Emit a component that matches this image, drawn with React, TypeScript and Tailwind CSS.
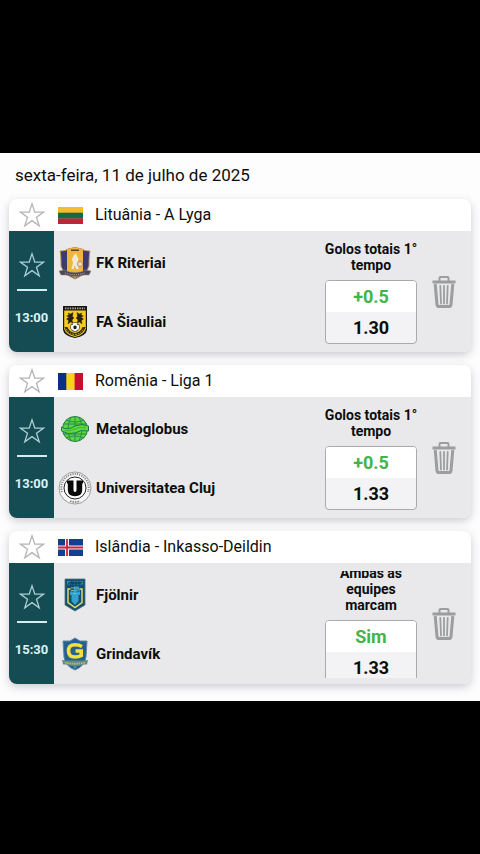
import React from "react";

type Team = { name: string; crest: React.ReactNode };
type Match = {
  league: string;
  flag: React.ReactNode;
  time: string;
  home: Team;
  away: Team;
  market: string;
  pick: string;
  odds: string;
};

const LithuaniaFlag = () => (
  <svg viewBox="0 0 25 17" className="h-[17px] w-[25px]" aria-hidden="true">
    <rect width="25" height="6" fill="#f6bd2b" />
    <rect y="5.7" width="25" height="6" fill="#116b45" />
    <rect y="11.4" width="25" height="5.6" fill="#bd2639" />
  </svg>
);

const RomaniaFlag = () => (
  <svg viewBox="0 0 25 17" className="h-[17px] w-[25px]" aria-hidden="true">
    <rect width="9" height="17" fill="#0b2f83" />
    <rect x="8.3" width="9" height="17" fill="#f8d21e" />
    <rect x="16.6" width="8.4" height="17" fill="#c8102e" />
  </svg>
);

const IcelandFlag = () => (
  <svg viewBox="0 0 25 17" className="h-[17px] w-[25px]" aria-hidden="true">
    <rect width="25" height="17" fill="#123f91" />
    <path d="M0 8.5H25M9 0V17" stroke="#f0eef2" strokeWidth="4" />
    <path d="M0 8.5H25M9 0V17" stroke="#cf2438" strokeWidth="1.8" />
  </svg>
);

const RiteriaiCrest = () => (
  <svg viewBox="0 0 32 34" className="h-[34px] w-8" aria-hidden="true">
    <path d="M1 5Q7 5 9 3Q16 0 23 3Q25 5 31 5Q30 8 30 20Q28 28 16 33Q4 28 2 20Q2 8 1 5Z" fill="#3b3b72" stroke="#b99a55" strokeWidth=".9" />
    <path d="M8 3.500Q16 0 24 3.500V27Q20 30 16 32Q12 30 8 27Z" fill="#efb73a" />
    <path d="M12 3.500H20V5H12Z" fill="#5a4428" />
    <path d="M15 9L17 7.500L18 10L19.500 13L18.500 17L19.500 23H17L16 19L14.500 23H12.500L14 17L13 13Z" fill="#f4ead4" />
    <circle cx="21" cy="18" r="2.6" fill="#e9d9b5" stroke="#8d8482" strokeWidth=".7" />
    <path d="M0 25L5 24Q16 29 27 24L32 25L30 29L25 29Q16 32 7 29L2 29Z" fill="#4c4660" stroke="#9d8b72" strokeWidth=".5" />
    <path d="M6 26.800Q16 30.500 26 26.800" fill="none" stroke="#a8977c" strokeWidth="1.1" strokeDasharray="1.2 1" />
  </svg>
);

const SiauliaiCrest = () => (
  <svg viewBox="0 0 26 34" className="h-[34px] w-[26px]" aria-hidden="true">
    <path d="M1 1H25V25Q24 31 13 33Q2 31 1 25Z" fill="#191713" />
    <path d="M2.200 5.500H23.800V24Q22 30 13 32Q4 30 2.200 24Z" fill="#f3ce20" />
    <path d="M3 3.3H23" stroke="#b9b19c" strokeWidth="1.800" strokeDasharray="1.4 1" />
    <path d="M6 8L8.500 9L11 7.500L10.500 11.500L12 13L10 15L11 18L8.500 17L6 19L6.500 15.500L4.500 14L7 12L4.500 11L7 10ZM20 8L17.500 9L15 7.500L15.500 11.500L14 13L16 15L15 18L17.500 17L20 19L19.500 15.500L21.500 14L19 12L21.500 11L19 10Z" fill="#2b210c" stroke="#2b210c" strokeWidth=".4" />
    <path d="M2.500 22L5.500 22Q7 27 13 28Q19 27 20.500 22L23.500 22Q22 29 13 31Q4 29 2.500 22Z" fill="#3a2f12" />
    <path d="M4.300 24Q7 29 13 29.500Q19 29 21.700 24" fill="none" stroke="#d9b82e" strokeWidth="1" strokeDasharray="1.5 1.200" />
    <circle cx="13" cy="22" r="4.6" fill="#f8f7f3" stroke="#28251f" strokeWidth=".6" />
    <path d="M13 20.300L14.800 21.700L14.100 24H11.900L11.200 21.700ZM9 20L10.500 18.800L10.800 20ZM17 20L15.500 18.800L15.200 20ZM10 25L11 24.700L11.500 26ZM16 25L15 24.700L14.500 26Z" fill="#171717" />
  </svg>
);

const MetaloglobusCrest = () => (
  <svg viewBox="0 0 28 28" className="size-7" aria-hidden="true">
    <circle cx="14" cy="14" r="12.5" fill="#58d83c" stroke="#2c7955" strokeWidth="1" />
    <path d="M14 1V27M2 9H26M2 19H26M5 5Q14 9 23 5M5 23Q14 19 23 23M10 2Q4 14 10 26M18 2Q24 14 18 26" fill="none" stroke="#288253" strokeWidth=".9" />
    <path d="M.5 12Q6 16 14 11Q21 8 27.5 11V16Q20 14 14 18Q7 20 .5 16Z" fill="#5bdc37" stroke="#247650" strokeWidth="1" />
    <path d="M4 15.5Q9 16 14 14Q19 11.500 25 13" fill="none" stroke="#3fae3e" strokeWidth="1.4" strokeDasharray="1.4 .7" />
  </svg>
);

const ClujCrest = () => (
  <svg viewBox="0 0 34 34" className="size-[34px]" aria-hidden="true">
    <circle cx="17" cy="17" r="16" fill="#f8f8f8" stroke="#777" strokeWidth=".7" />
    <path d="M4 21A13.700 13.700 0 1 1 30 21" fill="none" stroke="#858585" strokeWidth="2" strokeDasharray="1.2 1.100" />
    <path d="M12 30Q17 32 22 30" fill="none" stroke="#858585" strokeWidth="1.800" strokeDasharray="1.5 1" />
    <circle cx="17" cy="17" r="11" fill="#fff" stroke="#222" strokeWidth="1" />
    <path d="M9 9.500H15.500V12.500V19Q15.500 21 17 21Q18.500 21 18.500 19V9.500H25V12.500H24.200V19Q24 25.200 17 25.200Q10 25.200 9.800 19V12.500H9Z" fill="#090909" />
  </svg>
);

const FjolnirCrest = () => (
  <svg viewBox="0 0 22 34" className="h-[34px] w-[22px]" aria-hidden="true">
    <path d="M1 1H21V27L11 33L1 27Z" fill="#164e6e" stroke="#4a7180" strokeWidth=".8" />
    <path d="M3 3H19V6.500H3Z" fill="#2d8eae" />
    <path d="M4 5.500L7 4V6L9 4V6L12 4V6L15 4V6L18 4" stroke="#123e59" strokeWidth="1.300" fill="none" />
    <path d="M6.500 11H4V24.500L11 29.500L18 24.500V11H15.500" fill="none" stroke="#e2dc62" strokeWidth="1.500" />
    <path d="M10 8.500H15V11H12.500V13.500H16V17H14.500V23L11 27L7.500 23V17H6V13.500H10Z" fill="#31a2cf" />
    <path d="M7 10H11M7 12.500H10.500M12 12H16M9 15.500H13" fill="none" stroke="#7fb7a0" strokeWidth="1" />
  </svg>
);

const GrindavikCrest = () => (
  <svg viewBox="0 0 26 34" className="h-[34px] w-[26px]" aria-hidden="true">
    <path d="M13 1L18 4L25 4L24 20Q23 29 13 33Q3 29 2 20L1 4L8 4Z" fill="#236195" stroke="#638698" strokeWidth="1" />
    <path d="M20 9.500Q17 7.800 13 7.800Q6.500 7.800 6.500 14Q6.500 20 13 20Q17 20 19.200 18.500V14H13.500" fill="none" stroke="#f4e136" strokeWidth="3.600" />
    <path d="M0 23L4 23.500H22L26 23L25 27.500L22 27.500Q13 31 4 27.500L1 27.500Z" fill="#648b82" />
    <path d="M3 25.500Q13 28 23 25.500" fill="none" stroke="#b9b56e" strokeWidth="1.800" strokeDasharray="1.600 .7" />
    <circle cx="13" cy="30" r="1.500" fill="#3c96a8" />
  </svg>
);

const Star = () => (
  <svg viewBox="0 0 26 26" className="size-[26px]" fill="none" stroke="currentColor" strokeWidth="1.300" strokeLinejoin="miter" aria-hidden="true">
    <path d="M13 1.800L15.800 10.100H24.600L17.500 15.300L20.200 23.800L13 18.600L5.800 23.800L8.500 15.300L1.400 10.100H10.200Z" />
  </svg>
);

const Trash = () => (
  <svg viewBox="0 0 24 34" className="h-[34px] w-6" fill="none" stroke="currentColor" aria-hidden="true">
    <path d="M7.500 6V3Q7.500 2 8.500 2H15.500Q16.500 2 16.500 3V6" strokeWidth="2" />
    <path d="M.5 7H23.500" strokeWidth="3" />
    <path d="M3.200 9L5 29.500Q5.200 31.500 7.200 31.500H16.800Q18.800 31.500 19 29.500L20.800 9" strokeWidth="3" />
    <path d="M8.300 11L9 28.500M12 11V28.500M15.700 11L15 28.500" strokeWidth="1.800" strokeLinecap="round" />
  </svg>
);

const matches: Match[] = [
  {
    league: "Lituânia - A Lyga",
    flag: <LithuaniaFlag />,
    time: "13:00",
    home: { name: "FK Riteriai", crest: <RiteriaiCrest /> },
    away: { name: "FA Šiauliai", crest: <SiauliaiCrest /> },
    market: "Golos totais 1° tempo",
    pick: "+0.5",
    odds: "1.30",
  },
  {
    league: "Romênia - Liga 1",
    flag: <RomaniaFlag />,
    time: "13:00",
    home: { name: "Metaloglobus", crest: <MetaloglobusCrest /> },
    away: { name: "Universitatea Cluj", crest: <ClujCrest /> },
    market: "Golos totais 1° tempo",
    pick: "+0.5",
    odds: "1.33",
  },
  {
    league: "Islândia - Inkasso-Deildin",
    flag: <IcelandFlag />,
    time: "15:30",
    home: { name: "Fjölnir", crest: <FjolnirCrest /> },
    away: { name: "Grindavík", crest: <GrindavikCrest /> },
    market: "Ambas as equipes marcam",
    pick: "Sim",
    odds: "1.33",
  },
];

const TeamRow = ({ team }: { team: Team }) => (
  <div className="flex flex-1 items-center">
    <span className="flex w-[42px] justify-center">{team.crest}</span>
    <span className="text-[15px] leading-6 font-bold">{team.name}</span>
  </div>
);

const MatchCard = ({ match }: { match: Match }) => (
  <article className="overflow-hidden rounded-lg bg-white shadow-[0_3px_8px_rgba(60,60,80,0.25)]">
    <header className="flex h-8 items-center">
      <button type="button" aria-label="Marcar liga como favorita" className="flex w-[45px] justify-center text-[#b5b5b7]">
        <Star />
      </button>
      <span className="ml-1">{match.flag}</span>
      <h2 className="ml-3 text-base">{match.league}</h2>
    </header>
    <div className="flex h-[121px] bg-[#e9e9eb]">
      <div className="flex w-[45px] flex-col items-center bg-[#154b53] pt-[21px] text-[#dcf3f5]">
        <button type="button" aria-label="Marcar jogo como favorito" className="text-[#a9cdd2]">
          <Star />
        </button>
        <span className="mt-[11px] h-[2px] w-[30px] bg-[#d3eef1]" />
        <time className="mt-[17px] text-[13px] leading-5 font-bold">{match.time}</time>
      </div>
      <div className="flex min-w-0 flex-1 flex-col pt-[2px]">
        <TeamRow team={match.home} />
        <TeamRow team={match.away} />
      </div>
      <div className="mt-2 mb-[6px] flex w-24 flex-col items-center justify-center overflow-hidden text-center">
        <p className="shrink-0 text-[14px] leading-4 font-bold">{match.market}</p>
        <div className="mt-[7px] w-[92px] shrink-0 overflow-hidden rounded border border-[#aaaaad] bg-[#f3f3f5] text-lg leading-[31px] font-bold">
          <div className="bg-white text-[#3fb54b]">{match.pick}</div>
          <div>{match.odds}</div>
        </div>
      </div>
      <button type="button" aria-label="Remover jogo" className="mr-[15px] ml-[13px] text-[#9c9d9f]">
        <Trash />
      </button>
    </div>
  </article>
);

export default function App() {
  return (
    <div className="min-h-screen bg-black pt-[153px] font-['Roboto',sans-serif] text-[#0d0d0d]">
      <main className="bg-[#fdfdfe] px-[9px] pb-[17px]">
        <h1 className="px-[6px] pt-[10px] pb-3 text-[17px] leading-6">sexta-feira, 11 de julho de 2025</h1>
        <div className="flex flex-col gap-[13px]">
          {matches.map((match) => (
            <MatchCard key={match.league} match={match} />
          ))}
        </div>
      </main>
    </div>
  );
}
